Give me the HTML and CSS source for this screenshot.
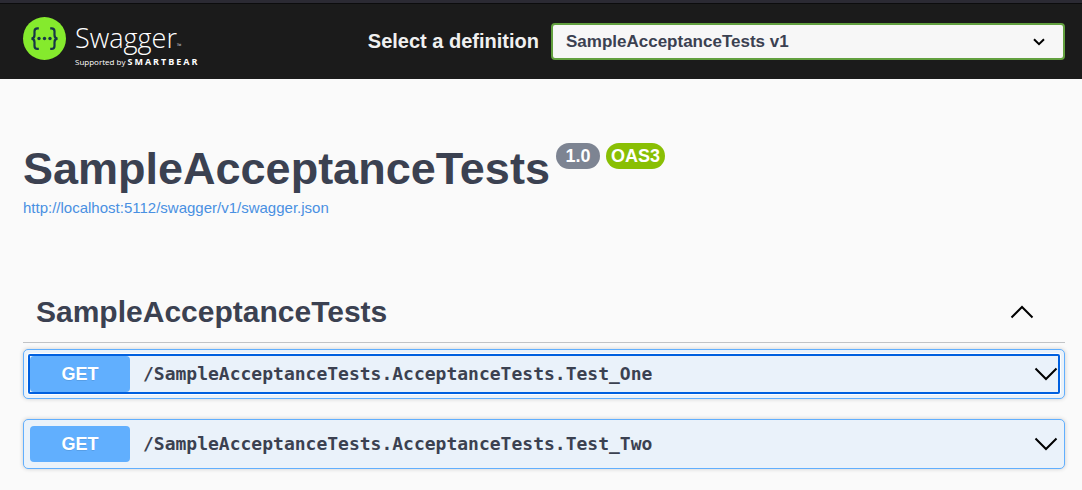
FILE: index.html
```html
<!DOCTYPE html>
<html lang="en">
<head>
<meta charset="utf-8">
<meta name="viewport" content="width=device-width, initial-scale=1">
<title>Swagger UI</title>
<link rel="stylesheet" href="styles.css">
</head>
<body>
<header class="topbar">
  <a class="logo" href="#" aria-label="Swagger, supported by SmartBear">
    <svg class="logo-mark" viewBox="0 0 44 44" aria-hidden="true">
      <circle cx="22.500" cy="22.500" r="21.500" fill="#85ea2d"/>
      <g fill="none" stroke="#173647" stroke-width="2.200">
        <path d="M16.800 12.300h-1.300q-3 0-3 3v3.700q0 3.300-3 3.600q3 .3 3 3.600v3.700q0 3 3 3h1.300"/>
        <path d="M28.200 12.300h1.300q3 0 3 3v3.700q0 3.300 3 3.600q-3 .3-3 3.600v3.700q0 3-3 3h-1.300"/>
      </g>
      <g fill="#173647"><circle cx="17" cy="22.500" r="1.700"/><circle cx="22.500" cy="22.500" r="1.700"/><circle cx="28" cy="22.500" r="1.700"/></g>
    </svg>
    <span class="logo-text">
      <span class="logo-name">Swagger<span class="logo-tm">™</span></span>
      <span class="logo-by">Supported by <b class="logo-brand">SMARTBEAR</b></span>
    </span>
  </a>
  <div class="definition">
    <label class="definition-label" for="definition">Select a definition</label>
    <span class="select-box">
      <select class="definition-select" id="definition"><option>SampleAcceptanceTests v1</option></select>
      <svg class="select-arrow" viewBox="0 0 12 8" aria-hidden="true"><path d="M1 1.200l5 4.900 5-4.900" fill="none" stroke="#000" stroke-width="2"/></svg>
    </span>
  </div>
</header>
<main class="content">
  <section class="info">
    <h1 class="title">SampleAcceptanceTests</h1>
    <span class="badge">1.0</span>
    <span class="badge badge-oas">OAS3</span>
  </section>
  <a class="spec-link" href="#">http://localhost:5112/swagger/v1/swagger.json</a>
  <section class="group">
    <div class="group-head">
      <h2 class="group-title">SampleAcceptanceTests</h2>
      <button class="toggle" type="button" aria-label="Collapse operations"><svg class="chevron" viewBox="0 0 24 14" aria-hidden="true"><path d="M1.500 12.500L12 2l10.500 10.500"/></svg></button>
    </div>
    <div class="operation">
      <button class="summary summary-focused" type="button">
        <span class="method">GET</span>
        <span class="path">/SampleAcceptanceTests.AcceptanceTests.Test_One</span>
        <svg class="chevron" viewBox="0 0 24 14" aria-hidden="true"><path d="M1.500 1.500L12 12 22.500 1.500"/></svg>
      </button>
    </div>
    <div class="operation">
      <button class="summary" type="button">
        <span class="method">GET</span>
        <span class="path">/SampleAcceptanceTests.AcceptanceTests.Test_Two</span>
        <svg class="chevron" viewBox="0 0 24 14" aria-hidden="true"><path d="M1.500 1.500L12 12 22.500 1.500"/></svg>
      </button>
    </div>
  </section>
</main>
</body>
</html>
```
FILE: styles.css
```css
* { box-sizing: border-box; }

body {
  margin: 0;
  background: #fafafa;
  color: #3b4151;
  font-family: "Liberation Sans", Arial, sans-serif;
}

.topbar {
  display: flex;
  align-items: flex-start;
  justify-content: space-between;
  padding: 13px 17px 11px 22px;
  border-top: 3px solid #2b2a33;
  background: #1b1b1b;
  box-shadow: inset 0 1px #0c0c0d;
}

.logo {
  display: flex;
  gap: 9px;
  color: #fff;
  text-decoration: none;
  font-family: "Open Sans", sans-serif;
}

.logo-mark { width: 44px; height: 44px; }
.logo-text { display: flex; flex-direction: column; padding-top: 4px; white-space: nowrap; }
.logo-name { font-size: 27px; font-weight: 300; line-height: 36px; }
.logo-tm { font-size: 6px; line-height: 1px; }
.logo-by { font-size: 8px; line-height: 12px; }
.logo-brand { font-size: 9px; font-weight: 700; line-height: 1px; letter-spacing: 2px; }

.definition { display: flex; flex: 0 1 67%; align-items: center; justify-content: flex-end; gap: 12px; padding-top: 7px; }
.definition-label { color: #f0f0f0; font-size: 20px; font-weight: 700; white-space: nowrap; }
.select-box { display: grid; flex: 0 1 514px; align-items: center; }

.definition-select {
  grid-area: 1 / 1;
  width: 100%;
  height: 37px;
  padding: 0 13px;
  border: 2px solid #62a03f;
  border-radius: 4px;
  appearance: none;
  background: #f7f7f7;
  color: #3b4151;
  font: 700 17px "Liberation Sans", Arial, sans-serif;
}

.select-arrow { grid-area: 1 / 1; justify-self: end; width: 12px; height: 8px; margin-right: 20px; pointer-events: none; }

.content { padding: 64px 17px 20px 23px; }
.info { display: flex; align-items: flex-start; gap: 6px; }
.title { margin: 0; font-size: 45px; line-height: 52px; }

.badge {
  min-width: 44px;
  padding: 0 5px;
  border-radius: 13px;
  background: #7d8492;
  color: #fff;
  font-size: 18px;
  font-weight: 700;
  line-height: 26px;
  text-align: center;
}

.badge-oas { background: #89bf04; }
.spec-link { display: block; color: #4990e2; font-size: 15px; line-height: 26px; text-decoration: none; }
.group { margin-top: 61px; }

.group-head {
  display: flex;
  align-items: center;
  justify-content: space-between;
  margin-bottom: 6px;
  padding: 12px 31px 12px 13px;
  border-bottom: 1px solid #c1c3c6;
}

.group-title { margin: 0; font-size: 30px; line-height: 36px; }
.toggle { display: flex; padding: 0; border: 0; background: none; }
.chevron { width: 24px; height: 14px; fill: none; stroke: #000; stroke-width: 2; }

.operation {
  margin-bottom: 20px;
  padding: 4px;
  border: 1px solid #61affe;
  border-radius: 5px;
  background: #eaf2fa;
  box-shadow: 0 0 4px #00000030;
}

.summary {
  display: flex;
  align-items: center;
  width: 100%;
  padding: 2px;
  border: 0;
  border-radius: 2px;
  background: none;
  color: #3b4151;
  text-align: left;
}

.summary-focused { box-shadow: inset 0 0 0 2px #0060df, 0 0 0 1px #fff; }

.method {
  width: 100px;
  border-radius: 4px;
  background: #61affe;
  color: #fff;
  font: 700 18px/36px "Liberation Sans", Arial, sans-serif;
  text-align: center;
  text-shadow: 0 1px #0000001a;
}

.path { flex: 1; padding-left: 13px; font: 700 18px/36px "DejaVu Sans Mono", monospace; }
```
